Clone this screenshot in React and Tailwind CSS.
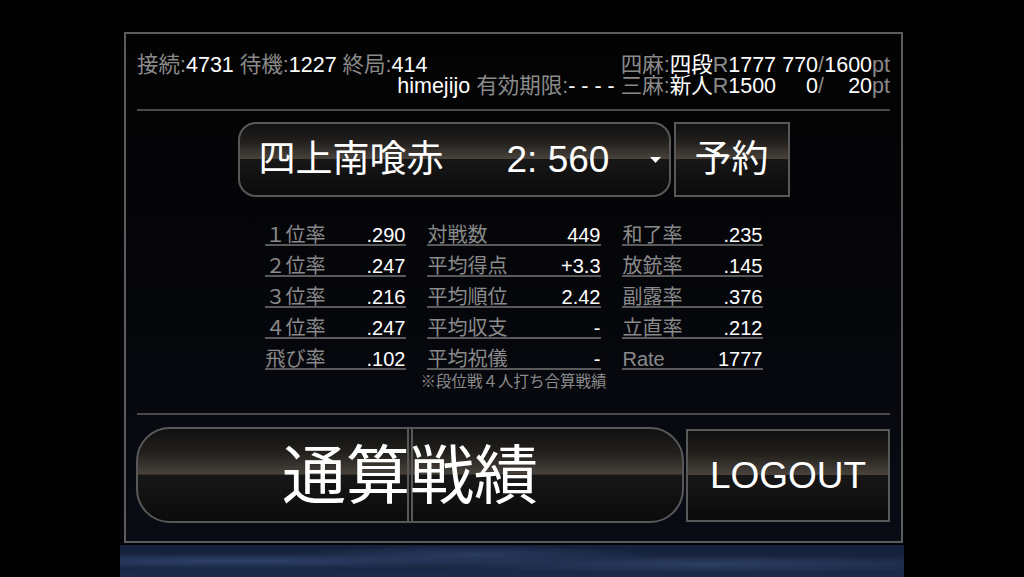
import React from 'react'

const FONT = "font-['Liberation_Sans','Noto_Sans_CJK_JP',sans-serif]"

const STATS = [
  [
    { label: '１位率', value: '.290' },
    { label: '２位率', value: '.247' },
    { label: '３位率', value: '.216' },
    { label: '４位率', value: '.247' },
    { label: '飛び率', value: '.102' },
  ],
  [
    { label: '対戦数', value: '449' },
    { label: '平均得点', value: '+3.3' },
    { label: '平均順位', value: '2.42' },
    { label: '平均収支', value: '-' },
    { label: '平均祝儀', value: '-' },
  ],
  [
    { label: '和了率', value: '.235' },
    { label: '放銃率', value: '.145' },
    { label: '副露率', value: '.376' },
    { label: '立直率', value: '.212' },
    { label: 'Rate', value: '1777' },
  ],
]

const GLOSS = 'bg-[linear-gradient(to_bottom,#101010_0%,#221f1c_25%,#48423b_49%,#171717_50%,#0b0b0b_100%)]'

function Dim({ children }) {
  return <span className="text-[#8a8a8a]">{children}</span>
}

function RankRow({ mode, dan, rate, pts, max }) {
  return (
    <div className="flex items-center">
      <Dim>{mode}</Dim>
      <span>{dan}</span>
      <Dim>R</Dim>
      <span>{rate}</span>
      <span className="w-[48px] text-right">{pts}<Dim>/</Dim></span>
      <span className="w-[48px] text-right">{max}</span>
      <Dim>pt</Dim>
    </div>
  )
}

function StatColumn({ rows, width }) {
  return (
    <div className={width}>
      {rows.map(r => (
        <div key={r.label} className="h-[31px] flex items-end justify-between border-b-2 border-[#5a5a5a] text-[20px] leading-[18px]">
          <span className="text-[#8a8a8a] pl-px">{r.label}</span>
          <span className="text-white">{r.value}</span>
        </div>
      ))}
    </div>
  )
}

export default function App() {
  return (
    <div className={`w-full h-[577px] bg-black ${FONT}`}>
      <div className="w-[784px] h-[577px] mx-auto flex flex-col pt-[32px] pl-[4px] bg-[linear-gradient(to_bottom,#000000,#03040a)]">
        {/* main panel */}
        <div className="w-[779px] h-[511px] shrink-0 border-2 border-[#5c5c5c] px-[11px] pt-[21px] flex flex-col bg-[linear-gradient(to_bottom,#030303_0%,#05060a_50%,#090c14_100%)]">
          {/* header */}
          <div className="text-[21.5px] leading-[21px] text-white">
            <div className="flex items-center justify-between">
              <div>
                <Dim>接続:</Dim>4731 <Dim>待機:</Dim>1227 <Dim>終局:</Dim>414
              </div>
              <RankRow mode="四麻:" dan="四段" rate="1777" pts="770" max="1600" />
            </div>
            <div className="flex items-center justify-end">
              <span className="mr-[6px]">himejijo <Dim>有効期限:</Dim>- - - -</span>
              <RankRow mode="三麻:" dan="新人" rate="1500" pts="0" max="20" />
            </div>
          </div>

          <div className="h-[2px] bg-[#4a4a4a] mt-[12px]" />

          {/* rule select */}
          <div className="flex justify-center gap-[3px] mt-[11px]">
            <div className={`w-[433px] h-[75px] rounded-[18px] border-2 border-[#585858] flex items-center pl-[19px] pr-[8px] text-white ${GLOSS}`}>
              <span className="w-[248px] text-[37px] leading-none">四上南喰赤</span>
              <span className="text-[37px] leading-none">2: 560</span>
              <svg className="ml-auto" width="11" height="6" viewBox="0 0 11 6">
                <path d="M0 0 L11 0 L5.5 6 Z" fill="#fff" />
              </svg>
            </div>
            <div className={`w-[116px] h-[75px] border-2 border-[#585858] flex items-center justify-center text-white text-[37px] leading-none ${GLOSS}`}>
              予約
            </div>
          </div>

          {/* stats */}
          <div className="flex justify-center gap-[21px] mt-[18px]">
            <StatColumn rows={STATS[0]} width="w-[141px]" />
            <StatColumn rows={STATS[1]} width="w-[174px]" />
            <StatColumn rows={STATS[2]} width="w-[141px]" />
          </div>
          <div className="text-center text-[15.5px] leading-[18px] text-[#8a8a8a] mt-[3px]">
            ※段位戦４人打ち合算戦績
          </div>

          <div className="h-[2px] bg-[#4a4a4a] mt-[22px]" />

          {/* bottom buttons */}
          <div className="flex items-center mt-[12px] -ml-px">
            <div className={`relative w-[548px] h-[96px] rounded-[34px] border-2 border-[#585858] flex items-center justify-center ${GLOSS}`}>
              <div className="absolute left-[269px] top-0 bottom-0 w-[6px] border-x-2 border-[#585858]" />
              <span className="relative text-white text-[64px] leading-none pt-[2px]">通算戦績</span>
            </div>
            <div className={`ml-[2px] w-[204px] h-[93px] border-2 border-[#585858] flex items-center justify-center text-white text-[37px] leading-none ${GLOSS}`}>
              LOGOUT
            </div>
          </div>
        </div>

        {/* earth strip */}
        <div className="flex-1 mt-[2px] -ml-[4px] bg-[radial-gradient(ellipse_at_15%_50%,#2e4168_0%,transparent_35%),radial-gradient(ellipse_at_45%_30%,#2a3b60_0%,transparent_30%),radial-gradient(ellipse_at_75%_60%,#2c3e63_0%,transparent_35%),linear-gradient(to_bottom,#15203a,#1c2a48)]" />
      </div>
    </div>
  )
}
